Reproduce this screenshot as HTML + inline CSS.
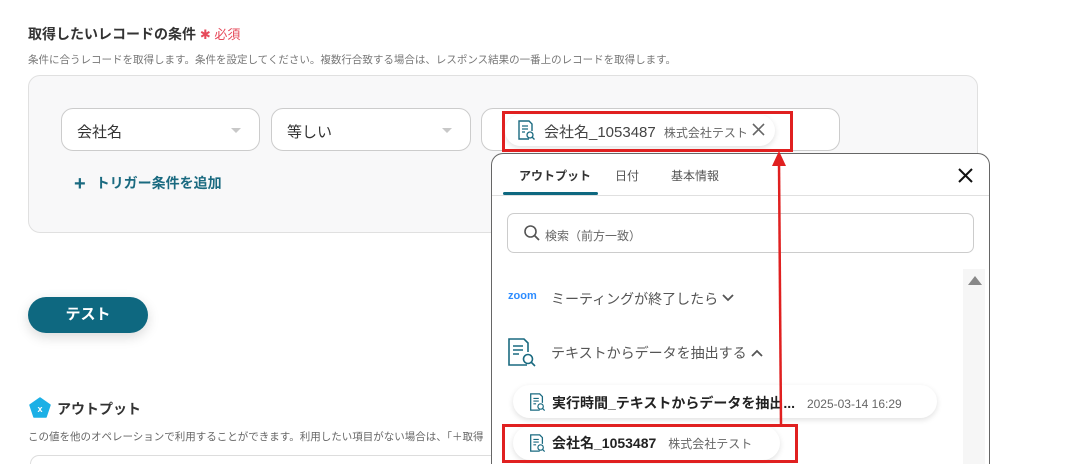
<!DOCTYPE html>
<html><head><meta charset="utf-8"><style>
*{box-sizing:border-box;margin:0;padding:0}
html,body{width:1065px;height:464px;overflow:hidden}
body{background:#fff;font-family:"Liberation Sans","Noto Sans CJK JP",sans-serif;position:relative;color:#333}
#w{position:absolute;left:0;top:0;width:1065px;height:464px;overflow:hidden}
.a{position:absolute;white-space:nowrap}
.sel{position:absolute;top:108px;height:43px;border:1px solid #ccc;border-radius:12px;background:#fff;font-size:15px;color:#333;padding:12px 0 0 15px}
.caret{position:absolute;right:18px;top:19px;width:0;height:0;border-left:5px solid transparent;border-right:5px solid transparent;border-top:5px solid #c8c8c8}
.pill{position:absolute;background:#fff;border-radius:17px;box-shadow:0 2px 6px rgba(0,0,0,.12)}
</style></head><body><div id="w">
<div class="a" style="left:28px;top:24px;font-size:14px;font-weight:bold;color:#333">取得したいレコードの条件 <span style="color:#e64a5a;font-size:13px;font-weight:normal">✱ 必須</span></div>
<div class="a" style="left:28px;top:52px;font-size:10.5px;color:#777">条件に合うレコードを取得します。条件を設定してください。複数行合致する場合は、レスポンス結果の一番上のレコードを取得します。</div>
<div class="a" style="left:28px;top:75px;width:950px;height:158px;border:1px solid #e0e0e0;border-radius:12px;background:#f8f8f9"></div>
<div class="sel" style="left:61px;width:199px">会社名<div class="caret"></div></div>
<div class="sel" style="left:271px;width:200px">等しい<div class="caret"></div></div>
<div class="sel" style="left:481px;width:359px"></div>
<div class="a" style="left:74px;top:173px;font-size:14px;font-weight:bold;color:#1a6a80"><span style="font-size:20px;vertical-align:-2px;margin-right:10px">+</span>トリガー条件を追加</div>
<div class="pill" style="left:505px;top:115px;width:270px;height:31px"></div>
<svg class="a" style="left:516px;top:119px" width="20" height="22" viewBox="0 0 20 22"><path d="M13 20H3V2h10l3 3v7" fill="none" stroke="#1a6a80" stroke-width="1.4"/><path d="M6 7h6M6 10h6M6 13h3" stroke="#1a6a80" stroke-width="1.2"/><circle cx="14" cy="16" r="3" fill="none" stroke="#1a6a80" stroke-width="1.3"/><path d="M16 18l2.5 2.5" stroke="#1a6a80" stroke-width="1.3"/></svg>
<div class="a" style="left:544px;top:121px;font-size:15px;color:#444">会社名_1053487 <span style="font-size:12px;color:#666;margin-left:4px">株式会社テスト</span></div>
<svg class="a" style="left:752px;top:123px" width="13" height="13" viewBox="0 0 13 13"><path d="M1 1l11 11M12 1L1 12" stroke="#666" stroke-width="1.6"/></svg>
<div class="a" style="left:502px;top:111px;width:291px;height:41px;border:3px solid #e02020"></div>
<div class="a" style="left:28px;top:297px;width:120px;height:36px;border-radius:18px;background:#0e6880;color:#fff;font-weight:bold;font-size:15px;text-align:center;line-height:36px;box-shadow:0 4px 12px rgba(0,0,0,.15)">テスト</div>
<svg class="a" style="left:29px;top:397px" width="22" height="21" viewBox="0 0 22 21"><path d="M11 1L21 8l-4 12H5L1 8z" fill="#1cb0e6" stroke="#1cb0e6" stroke-linejoin="round" stroke-width="1.5"/><text x="11" y="15" font-size="9" fill="#fff" text-anchor="middle" font-family="Liberation Sans" font-weight="bold">x</text></svg>
<div class="a" style="left:57px;top:399px;font-size:14px;font-weight:bold;color:#333">アウトプット</div>
<div class="a" style="left:28px;top:429px;font-size:10.5px;color:#666">この値を他のオペレーションで利用することができます。利用したい項目がない場合は、「＋取得</div>
<div class="a" style="left:30px;top:455px;width:480px;height:9px;border:1px solid #ddd;border-bottom:none;border-radius:10px 10px 0 0"></div>
<div class="a" style="left:491px;top:153px;width:499px;height:311px;border:1px solid #666;border-bottom:none;border-radius:12px 12px 0 0;background:#fff"></div>
<div class="a" style="left:519px;top:167px;font-size:12px;font-weight:bold;color:#333">アウトプット</div>
<div class="a" style="left:615px;top:167px;font-size:12px;color:#555">日付</div>
<div class="a" style="left:671px;top:167px;font-size:12px;color:#555">基本情報</div>
<div class="a" style="left:503px;top:192px;width:95px;height:3px;background:#0e6880;border-radius:2px"></div>
<div class="a" style="left:492px;top:195px;width:497px;height:1px;background:#e0e0e0"></div>
<svg class="a" style="left:958px;top:168px" width="15" height="15" viewBox="0 0 15 15"><path d="M1 1l13 13M14 1L1 14" stroke="#111" stroke-width="2"/></svg>
<div class="a" style="left:507px;top:213px;width:467px;height:40px;border:1px solid #ccc;border-radius:7px"></div>
<svg class="a" style="left:523px;top:224px" width="18" height="18" viewBox="0 0 18 18"><circle cx="7.5" cy="7.5" r="5.5" fill="none" stroke="#555" stroke-width="1.6"/><path d="M11.5 11.5L16 16" stroke="#555" stroke-width="1.8"/></svg>
<div class="a" style="left:545px;top:227px;font-size:12px;color:#666">検索（前方一致）</div>
<div class="a" style="left:963px;top:269px;width:22px;height:195px;background:#f6f6f6"></div>
<div class="a" style="left:968px;top:276px;width:0;height:0;border-left:7px solid transparent;border-right:7px solid transparent;border-bottom:9px solid #888"></div>
<div class="a" style="left:508px;top:290px;font-size:11px;color:#2d8cff;font-weight:bold">zoom</div>
<div class="a" style="left:551px;top:289px;font-size:14px;color:#555">ミーティングが終了したら</div>
<svg class="a" style="left:722px;top:294px" width="12" height="8" viewBox="0 0 12 8"><path d="M1 1l5 5 5-5" fill="none" stroke="#555" stroke-width="1.8"/></svg>
<svg class="a" style="left:507px;top:337px" width="30" height="30" viewBox="0 0 30 30"><path d="M20 28H2V2h15l4 4v9" fill="none" stroke="#1a6a80" stroke-width="1.6"/><path d="M6 9h10M6 13h10M6 17h6" stroke="#1a6a80" stroke-width="1.5"/><circle cx="21" cy="22" r="4.5" fill="none" stroke="#1a6a80" stroke-width="1.6"/><path d="M24.5 25.5L28 29" stroke="#1a6a80" stroke-width="1.6"/></svg>
<div class="a" style="left:551px;top:343px;font-size:14px;color:#555">テキストからデータを抽出する</div>
<svg class="a" style="left:751px;top:349px" width="12" height="8" viewBox="0 0 12 8"><path d="M1 7l5-5 5 5" fill="none" stroke="#555" stroke-width="1.8"/></svg>
<div class="pill" style="left:513px;top:385px;width:424px;height:33px"></div>
<svg class="a" style="left:528px;top:392px" width="18" height="20" viewBox="0 0 20 22"><path d="M13 20H3V2h10l3 3v7" fill="none" stroke="#1a6a80" stroke-width="1.4"/><path d="M6 7h6M6 10h6M6 13h3" stroke="#1a6a80" stroke-width="1.2"/><circle cx="14" cy="16" r="3" fill="none" stroke="#1a6a80" stroke-width="1.3"/><path d="M16 18l2.5 2.5" stroke="#1a6a80" stroke-width="1.3"/></svg>
<div class="a" style="left:552px;top:393px;font-size:14px;font-weight:bold;color:#222">実行時間_テキストからデータを抽出... <span style="font-size:12px;font-weight:normal;color:#666;margin-left:8px">2025-03-14 16:29</span></div>
<div class="pill" style="left:513px;top:426px;width:267px;height:34px"></div>
<svg class="a" style="left:528px;top:433px" width="18" height="20" viewBox="0 0 20 22"><path d="M13 20H3V2h10l3 3v7" fill="none" stroke="#1a6a80" stroke-width="1.4"/><path d="M6 7h6M6 10h6M6 13h3" stroke="#1a6a80" stroke-width="1.2"/><circle cx="14" cy="16" r="3" fill="none" stroke="#1a6a80" stroke-width="1.3"/><path d="M16 18l2.5 2.5" stroke="#1a6a80" stroke-width="1.3"/></svg>
<div class="a" style="left:552px;top:433px;font-size:14px;font-weight:bold;color:#222">会社名_1053487 <span style="font-size:12px;font-weight:normal;color:#666;margin-left:8px">株式会社テスト</span></div>
<div class="a" style="left:502px;top:424px;width:296px;height:39px;border:3px solid #e02020"></div>
<svg class="a" style="left:760px;top:148px" width="40" height="285" viewBox="0 0 40 285"><path d="M21 277L19 14" stroke="#e02020" stroke-width="2.5"/><path d="M19 3L12 18h14z" fill="#e02020"/></svg>
</div></body></html>
